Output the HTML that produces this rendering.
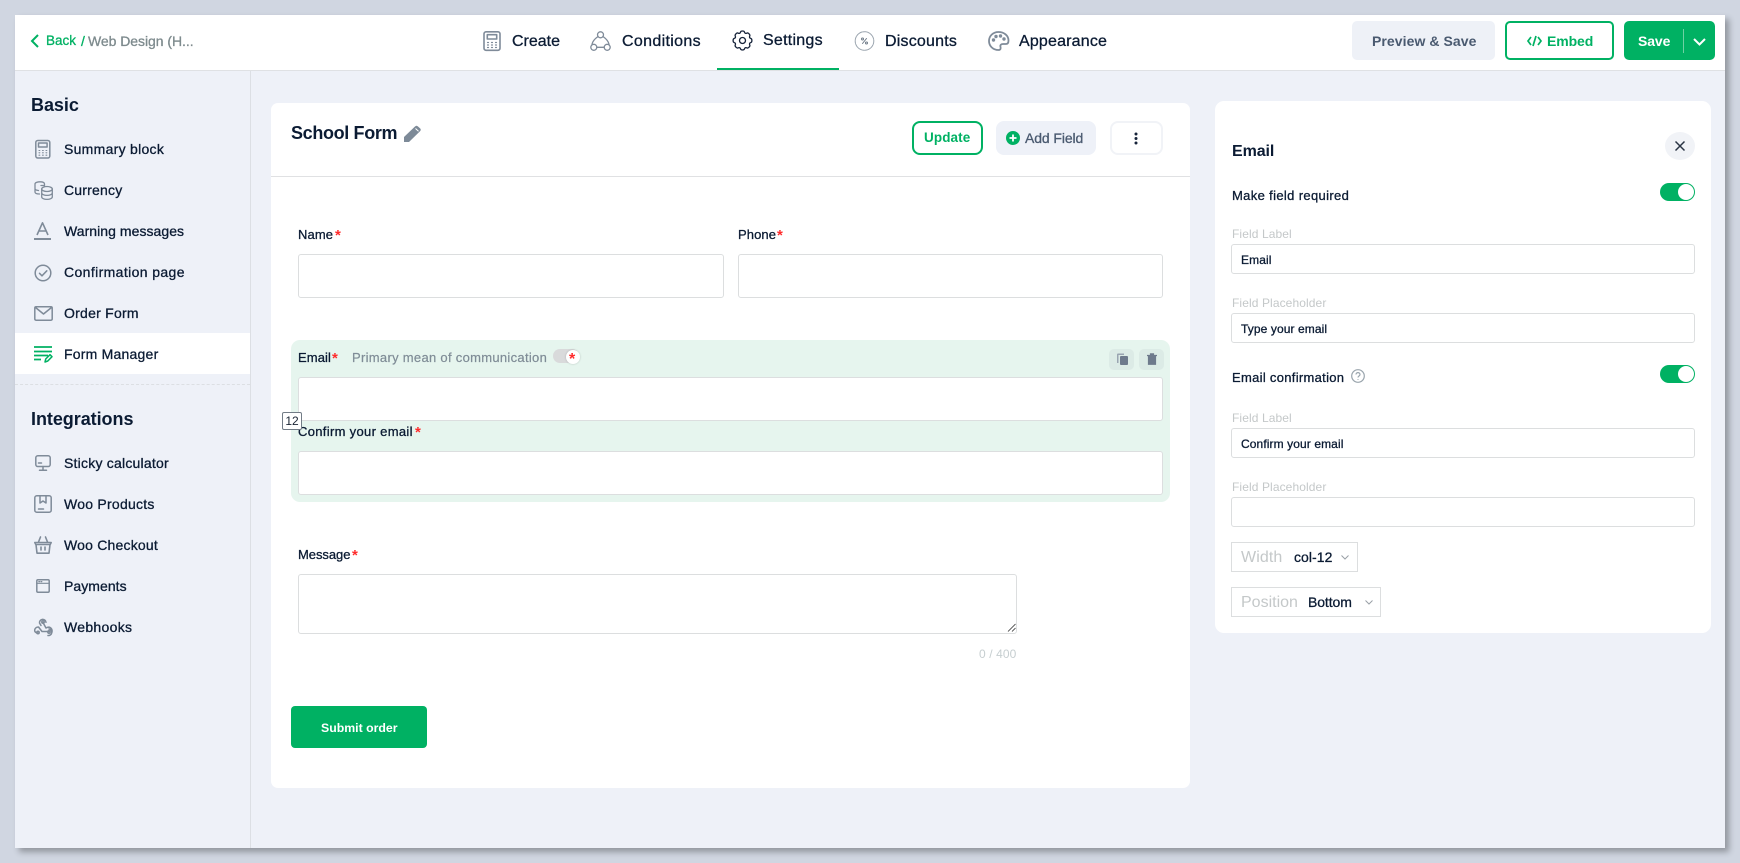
<!DOCTYPE html>
<html><head><meta charset="utf-8"><style>
*{box-sizing:border-box}
html,body{margin:0;padding:0;width:1740px;height:863px;overflow:hidden;background:#d0d6e1;font-family:"Liberation Sans",sans-serif;color:#0b1b33}
#w{position:absolute;left:15px;top:15px;width:1710px;height:833px;background:#eef1f8;box-shadow:4px 4px 6px rgba(0,0,0,.3)}
#a{position:absolute;left:0;top:0;width:1740px;height:863px;overflow:hidden}
.b{position:absolute}
.t{position:absolute;white-space:nowrap;line-height:20px;height:20px;-webkit-text-stroke:.3px currentColor}
.s{font-size:14px;left:64px;letter-spacing:.2px}
.h{font-weight:700;-webkit-text-stroke:0}
.n{font-size:16px;letter-spacing:.1px}
.inp{position:absolute;background:#fff;border:1px solid #dcdedf;border-radius:3px}
.lab{font-size:13px;letter-spacing:.1px}
.st{color:#ff2b2b;font-size:15px;font-weight:700;-webkit-text-stroke:0}
.fl{font-size:12px;color:#c4c8c9;-webkit-text-stroke:0;left:1232px;letter-spacing:.1px}
.v{font-size:12px;left:1241px;letter-spacing:.1px}
svg{position:absolute;overflow:visible}
.ic{fill:none;stroke:#7f8b99;stroke-width:1.5;stroke-linecap:round;stroke-linejoin:round}
</style></head><body><div id="a">
<div id="w"></div>
<!-- header -->
<div class="b" style="left:15px;top:15px;width:1710px;height:56px;background:#fff;border-bottom:1px solid #dfe1e4"></div>
<div class="b" style="left:717px;top:68px;width:122px;height:2px;background:#00b163"></div>
<svg style="left:30px;top:34px" width="10" height="14"><path d="M8 1L2 7l6 6" fill="none" stroke="#00b163" stroke-width="2"/></svg>
<div class="t" style="left:46px;top:31px;font-size:13.5px;color:#00b163">Back</div>
<div class="t" style="left:81px;top:31px;font-size:14px;color:#00b163">/</div>
<div class="t" style="left:88px;top:31px;font-size:14px;color:#7d8a8d;letter-spacing:-.05px">Web Design (H...</div>

<svg class="ic" style="left:482px;top:31px;stroke-width:1.600" width="20" height="20" viewBox="0 0 20 20"><rect x="2" y=".8" width="16" height="18.500" rx="2"/><rect x="5.300" y="3.700" width="9.400" height="4.300"/><path d="M5.500 11.500h1M9.500 11.500h1M13.500 11.500h1M5.500 14h1M9.500 14h1M13.500 14h1M5.500 16.500h1M9.500 16.500h1M13.500 16.500h1" stroke-width="1.200"/></svg>
<div class="t n" style="left:512px;top:32px;letter-spacing:0">Create</div>
<svg class="ic" style="left:590px;top:31px;stroke-width:1.300" width="21" height="20" viewBox="0 0 21 20"><circle cx="10.500" cy="3.800" r="3"/><circle cx="3.800" cy="16.300" r="3"/><circle cx="17.200" cy="16.300" r="3"/><path d="M8 5.500C4.500 8 2.500 10.500 2 13.300M13 5.500c3.500 2.500 5.500 5 6 7.800M6.800 16.300h7.400"/></svg>
<div class="t n" style="left:622px;top:32px;letter-spacing:.33px">Conditions</div>
<svg class="ic" style="left:732px;top:30px;stroke:#16233a;stroke-width:1.300" width="21" height="21" viewBox="0 0 21 21"><path d="M8.500 2.200c.3-1.600 3.700-1.600 4 0 .2 1 1.300 1.500 2.200 1 1.400-.9 3.800 1.500 3 3-.5.9 0 2 1 2.200 1.600.4 1.600 3.800 0 4.200-1 .2-1.500 1.300-1 2.200.8 1.500-1.600 3.900-3 3-.9-.5-2 0-2.200 1-.3 1.600-3.700 1.600-4 0-.2-1-1.300-1.500-2.200-1-1.400.9-3.800-1.500-3-3 .5-.9 0-2-1-2.200-1.600-.4-1.600-3.800 0-4.200 1-.2 1.500-1.300 1-2.200-.8-1.500 1.600-3.900 3-3 .9.500 2 0 2.200-1z"/><circle cx="10.500" cy="10.500" r="3"/></svg>
<div class="t n" style="left:763px;top:31px;letter-spacing:.25px">Settings</div>
<svg class="ic" style="left:854px;top:31px;stroke-width:1;stroke:#9aa4ae" width="21" height="20" viewBox="0 0 21 20"><circle cx="10.500" cy="10" r="9.300" stroke-dasharray="3 .8"/><path d="M8.500 12.500l4-5" stroke="#6f7b88"/><circle cx="8.500" cy="8" r="1" stroke="#6f7b88"/><circle cx="12.500" cy="12" r="1" stroke="#6f7b88"/></svg>
<div class="t n" style="left:885px;top:32px;letter-spacing:.2px">Discounts</div>
<svg class="ic" style="left:988px;top:31px;stroke-width:1.800" width="21" height="20" viewBox="0 0 21 20"><path d="M10.500 1C5 1 1 5 1 10s4 9 9.500 9c2 0 2.500-1.500 2-3-.6-1.800.5-3 2.500-3h3c1.500 0 2.500-1 2.500-3.500C20.500 4.500 16 1 10.500 1z"/><circle cx="5.500" cy="9" r=".8" fill="#7f8b99"/><circle cx="8" cy="5.500" r=".8" fill="#7f8b99"/><circle cx="12.500" cy="5" r=".8" fill="#7f8b99"/><circle cx="16" cy="8" r=".8" fill="#7f8b99"/></svg>
<div class="t n" style="left:1019px;top:32px;letter-spacing:.18px">Appearance</div>

<div class="b" style="left:1352px;top:21px;width:143px;height:39px;background:#eef1f7;border-radius:5px"></div>
<div class="t h" style="left:1372px;top:31px;font-size:14px;color:#4a5a70;letter-spacing:.07px">Preview &amp; Save</div>
<div class="b" style="left:1505px;top:21px;width:109px;height:39px;border:2px solid #00b163;border-radius:5px"></div>
<svg style="left:1527px;top:35px" width="15" height="12" fill="none" stroke="#00b163" stroke-width="1.700"><path d="M4 2L1 6l3 4M11 2l3 4-3 4M9 1L6 11"/></svg>
<div class="t h" style="left:1547px;top:31px;font-size:14px;color:#00b163;letter-spacing:-.1px">Embed</div>
<div class="b" style="left:1624px;top:21px;width:91px;height:39px;background:#00b163;border-radius:5px"></div>
<div class="t h" style="left:1638px;top:31px;font-size:14px;color:#fff;letter-spacing:-.1px">Save</div>
<div class="b" style="left:1683px;top:29px;width:1px;height:24px;background:#6fd1a3"></div>
<svg style="left:1693px;top:38px" width="13" height="8" fill="none" stroke="#fff" stroke-width="2"><path d="M1 1l5.500 5.500L12 1"/></svg>

<!-- sidebar -->
<div class="b" style="left:250px;top:71px;width:1px;height:777px;background:#dcdfe4"></div>
<div class="b" style="left:15px;top:333px;width:235px;height:41px;background:#fff"></div>
<div class="b" style="left:15px;top:384px;width:235px;height:0;border-top:1px dashed #dcdfe3"></div>
<div class="t h" style="left:31px;top:95px;font-size:18px;letter-spacing:-.05px">Basic</div>
<div class="t h" style="left:31px;top:409px;font-size:18px;letter-spacing:-.05px">Integrations</div>
<div class="t s" style="top:139px;letter-spacing:.28px">Summary block</div>
<div class="t s" style="top:180px">Currency</div>
<div class="t s" style="top:221px;letter-spacing:.05px">Warning messages</div>
<div class="t s" style="top:262px;letter-spacing:.38px">Confirmation page</div>
<div class="t s" style="top:303px;letter-spacing:.25px">Order Form</div>
<div class="t s" style="top:344px;letter-spacing:.22px">Form Manager</div>
<div class="t s" style="top:453px;letter-spacing:.22px">Sticky calculator</div>
<div class="t s" style="top:494px;letter-spacing:.25px">Woo Products</div>
<div class="t s" style="top:535px;letter-spacing:.2px">Woo Checkout</div>
<div class="t s" style="top:576px;letter-spacing:.05px">Payments</div>
<div class="t s" style="top:617px;letter-spacing:.3px">Webhooks</div>

<svg class="ic" style="left:34px;top:139px" width="18" height="20" viewBox="0 0 18 20"><rect x="1.800" y="1.500" width="14" height="17.500" rx="2"/><rect x="4.500" y="4" width="8.600" height="4"/><path d="M5 11.500h.8M8.500 11.500h.8M12 11.500h.8M5 13.800h.8M8.500 13.800h.8M12 13.800h.8M5 16.200h.8M8.500 16.200h.8M12 16.200h.8" stroke-width="1.100"/></svg>
<svg class="ic" style="left:34px;top:181px;stroke-width:1.300" width="19" height="19" viewBox="0 0 19 19"><path d="M10.500 5.500V3C10.500 1.500 8.500.8 6 .8S1 1.600 1 3c0 1 0 1.500 0 1.500M1 4v7c0 1.300 2 2 4.500 2M1 7.500c0 1 1.500 1.800 3.500 2M7 4.500h3"/><ellipse cx="13" cy="8" rx="5.300" ry="2.500"/><path d="M7.700 8v8c0 1.300 2.400 2.400 5.300 2.400s5.300-1.100 5.300-2.400V8M7.700 12c0 1.300 2.400 2.400 5.300 2.400s5.300-1.100 5.300-2.400"/></svg>
<svg class="ic" style="left:34px;top:222px;stroke-linecap:butt" width="17" height="18" viewBox="0 0 17 18"><path d="M3 13L8.500 .8 14 13M5 9h7" stroke-width="1.600"/><path d="M0 17h17" stroke-width="2"/></svg>
<svg class="ic" style="left:34px;top:264px" width="18" height="18" viewBox="0 0 18 18"><circle cx="9" cy="9" r="7.800"/><path d="M5.500 9.300l2.500 2.500 4.800-5"/></svg>
<svg class="ic" style="left:34px;top:306px" width="19" height="15" viewBox="0 0 19 15"><rect x=".8" y=".8" width="17.400" height="13.400" rx="1.300"/><path d="M1.500 1.500L9.500 8l8-6.500"/></svg>
<svg class="ic" style="left:34px;top:346px;stroke:#00b163;stroke-width:1.500;stroke-linecap:butt" width="18" height="17" viewBox="0 0 18 17"><path d="M0 1h18M0 5.500h18M0 9.500h14M0 13.500h7" stroke-width="1.800"/><path d="M11 16l.7-3 4.300-4.300 2 2L13.800 15z"/></svg>
<svg class="ic" style="left:35px;top:455px" width="16" height="16" viewBox="0 0 16 16"><rect x=".8" y=".8" width="14.400" height="10.700" rx="2"/><path d="M8 11.500v3.500M4.500 15.200h7M3.500 8h3"/></svg>
<svg class="ic" style="left:34px;top:495px" width="18" height="18" viewBox="0 0 18 18"><rect x=".8" y=".8" width="16.400" height="16.400" rx="2"/><path d="M6 1v7l3-2 3 2V1M4.500 14h5"/></svg>
<svg class="ic" style="left:34px;top:536px;stroke-width:1.600" width="18" height="18" viewBox="0 0 18 18"><path d="M.8 6.500h16.400l-1 2H1.800zM2 8.500l1 8.700h12l1-8.700M4.500 6L6.500 1M13.500 6l-2-5M7 11v3M11 11v3"/></svg>
<svg class="ic" style="left:36px;top:579px" width="14" height="14" viewBox="0 0 14 14"><rect x=".8" y=".8" width="12.400" height="12.400" rx="1.200"/><path d="M.8 4.300h12.400M2.800 2.600h.8M5 2.600h.8" stroke-width="1.200"/></svg>
<svg class="ic" style="left:34px;top:618px;stroke-width:1.500" width="19" height="18" viewBox="0 0 19 18"><path d="M7 7.500L5.500 5A3.200 3.200 0 1 1 12 4.300"/><path d="M4 15c-5 0-4-6 .5-6L8 13.500h7"/><path d="M15 11a3.200 3.200 0 1 1-1 6.500M9 4.500L12 10c3.500-2 6.500 0 6 4"/><circle cx="4" cy="14.500" r="1.200"/><circle cx="15" cy="14" r="1.200"/><circle cx="9" cy="4" r="1.200"/></svg>

<!-- form card -->
<div class="b" style="left:271px;top:103px;width:919px;height:685px;background:#fff;border-radius:7px"></div>
<div class="b" style="left:271px;top:176px;width:919px;height:1px;background:#e0e1e3"></div>
<div class="t h" style="left:291px;top:123px;font-size:18px;letter-spacing:-.35px">School Form</div>
<svg style="left:403px;top:124px" width="19" height="18" viewBox="0 0 19 18"><path d="M1 13L12 2.500c1-1 2-1 3 0l2 1.800c1 1 1 2 0 3L6 18H1z" fill="#7d8a98"/><path d="M12.500 4.500l3 2.800" stroke="#fff" stroke-width="1"/></svg>
<div class="b" style="left:912px;top:121px;width:71px;height:34px;border:2px solid #00b163;border-radius:8px"></div>
<div class="t h" style="left:924px;top:128px;font-size:13.500px;color:#00b163;letter-spacing:.1px">Update</div>
<div class="b" style="left:996px;top:121px;width:100px;height:34px;background:#eef1f8;border-radius:8px"></div>
<svg style="left:1006px;top:131px" width="14" height="14"><circle cx="7" cy="7" r="7" fill="#00b163"/><path d="M7 3.500v7M3.500 7h7" stroke="#fff" stroke-width="1.800"/></svg>
<div class="t" style="left:1025px;top:128px;font-size:14px;color:#4a5a70;letter-spacing:-.1px">Add Field</div>
<div class="b" style="left:1110px;top:121px;width:53px;height:34px;border:2px solid #f1f3f7;border-radius:8px"></div>
<svg style="left:1134px;top:132px" width="4" height="13" fill="#16233a"><circle cx="2" cy="2" r="1.500"/><circle cx="2" cy="6.500" r="1.500"/><circle cx="2" cy="11" r="1.500"/></svg>

<div class="t lab" style="left:298px;top:225px">Name</div><div class="t st" style="left:335px;top:226px">*</div>
<div class="inp" style="left:298px;top:254px;width:426px;height:44px"></div>
<div class="t lab" style="left:738px;top:225px">Phone</div><div class="t st" style="left:777px;top:226px">*</div>
<div class="inp" style="left:738px;top:254px;width:425px;height:44px"></div>

<div class="b" style="left:291px;top:340px;width:879px;height:162px;background:#e6f5ee;border-radius:9px"></div>
<div class="t lab" style="left:298px;top:348px">Email</div><div class="t st" style="left:332px;top:349px">*</div>
<div class="t lab" style="left:352px;top:348px;color:#7f8c96;letter-spacing:.3px;-webkit-text-stroke:.2px">Primary mean of communication</div>
<div class="b" style="left:553px;top:349px;width:26px;height:14px;background:#d9dadb;border-radius:7px"></div>
<div class="b" style="left:566px;top:350px;width:14px;height:14px;background:#fff;border-radius:50%;box-shadow:0 0 2px rgba(0,0,0,.2)"></div>
<div class="t" style="left:569px;top:350px;color:#ff2b2b;font-size:16px;font-weight:700;-webkit-text-stroke:0">*</div>
<div class="b" style="left:1109px;top:349px;width:25px;height:21px;background:#dcebe6;border-radius:5px"></div>
<div class="b" style="left:1139px;top:349px;width:25px;height:21px;background:#dcebe6;border-radius:5px"></div>
<svg style="left:1117px;top:353px" width="11" height="12" fill="#6e7a8c"><rect x="3" y="3" width="8" height="9" rx="1"/><path d="M0 1.500A1 1 0 0 1 1 .5h6v1.500H1.500V10H0z" fill="#9aa5b1"/></svg>
<svg style="left:1147px;top:353px" width="10" height="12" fill="#6e7a8c" stroke="#6e7a8c" stroke-width="1.200"><path d="M0 2.500h10M3.500 2V.8h3V2M1.500 3v8.300h7V3z"/></svg>
<div class="inp" style="left:298px;top:377px;width:865px;height:44px"></div>
<div class="t lab" style="left:298px;top:422px;letter-spacing:.32px">Confirm your email</div><div class="t st" style="left:415px;top:423px">*</div>
<div class="inp" style="left:298px;top:451px;width:865px;height:44px"></div>
<div class="b" style="left:282px;top:412px;width:20px;height:18px;background:#fff;border:1px solid #727c86;border-radius:2px;font-size:12px;line-height:16px;text-align:center;color:#1a2433">12</div>

<div class="t lab" style="left:298px;top:545px;letter-spacing:-.05px">Message</div><div class="t st" style="left:352px;top:546px">*</div>
<div class="inp" style="left:298px;top:574px;width:719px;height:60px"></div>
<svg style="left:1007px;top:623px" width="9" height="9" stroke="#333" stroke-width=".8"><path d="M1 8.500L8.500 1M5 8.500L8.500 5"/></svg>
<div class="t" style="left:979px;top:644px;font-size:12px;color:#c6ced0;-webkit-text-stroke:0;letter-spacing:.1px">0 / 400</div>
<div class="b" style="left:291px;top:706px;width:136px;height:42px;background:#00b163;border-radius:4px"></div>
<div class="t h" style="left:321px;top:718px;font-size:12.300px;color:#fff">Submit order</div>

<!-- right panel -->
<div class="b" style="left:1215px;top:101px;width:496px;height:532px;background:#fff;border-radius:9px"></div>
<div class="t h" style="left:1232px;top:142px;font-size:16px;letter-spacing:-.1px">Email</div>
<div class="b" style="left:1665px;top:132px;width:30px;height:28px;background:#f1f3f7;border-radius:50%"></div>
<svg style="left:1675px;top:141px" width="10" height="10" stroke="#2a3444" stroke-width="1.500"><path d="M.5.5l9 9M9.500.5l-9 9"/></svg>
<div class="t" style="left:1232px;top:186px;font-size:13px;letter-spacing:.35px">Make field required</div>
<div class="b" style="left:1660px;top:183px;width:35px;height:18px;background:#00b163;border-radius:9px"></div>
<div class="b" style="left:1678px;top:184px;width:16px;height:16px;background:#fff;border-radius:50%"></div>
<div class="t fl" style="top:224px">Field Label</div>
<div class="inp" style="left:1231px;top:244px;width:464px;height:30px"></div>
<div class="t v" style="top:250px">Email</div>
<div class="t fl" style="top:293px">Field Placeholder</div>
<div class="inp" style="left:1231px;top:313px;width:464px;height:30px"></div>
<div class="t v" style="top:319px">Type your email</div>
<div class="t" style="left:1232px;top:368px;font-size:13px;letter-spacing:.3px">Email confirmation</div>
<svg style="left:1351px;top:369px" width="14" height="14" fill="none" stroke="#9aa5ad" stroke-width="1.200"><circle cx="7" cy="7" r="6.300"/><path d="M5 5.500C5 3 9 3 9 5.500c0 1.500-2 1.500-2 3M7 10v.8"/></svg>
<div class="b" style="left:1660px;top:365px;width:35px;height:18px;background:#00b163;border-radius:9px"></div>
<div class="b" style="left:1678px;top:366px;width:16px;height:16px;background:#fff;border-radius:50%"></div>
<div class="t fl" style="top:408px">Field Label</div>
<div class="inp" style="left:1231px;top:428px;width:464px;height:30px"></div>
<div class="t v" style="top:434px">Confirm your email</div>
<div class="t fl" style="top:477px">Field Placeholder</div>
<div class="inp" style="left:1231px;top:497px;width:464px;height:30px"></div>
<div class="inp" style="left:1231px;top:542px;width:127px;height:30px;border-radius:0;border-color:#dcdedf"></div>
<div class="t" style="left:1241px;top:548px;font-size:16px;color:#c4c8c9;-webkit-text-stroke:0;letter-spacing:.1px">Width</div>
<div class="t" style="left:1294px;top:547px;font-size:14px;letter-spacing:.05px">col-12</div>
<svg style="left:1341px;top:555px" width="8" height="5" fill="none" stroke="#9aa0a6"><path d="M.5.500L4 4 7.500.5"/></svg>
<div class="inp" style="left:1231px;top:587px;width:150px;height:30px;border-radius:0"></div>
<div class="t" style="left:1241px;top:593px;font-size:16px;color:#c4c8c9;-webkit-text-stroke:0">Position</div>
<div class="t" style="left:1308px;top:592px;font-size:14px;letter-spacing:-.1px">Bottom</div>
<svg style="left:1365px;top:600px" width="8" height="5" fill="none" stroke="#9aa0a6"><path d="M.5.500L4 4 7.500.5"/></svg>
</div></body></html>
